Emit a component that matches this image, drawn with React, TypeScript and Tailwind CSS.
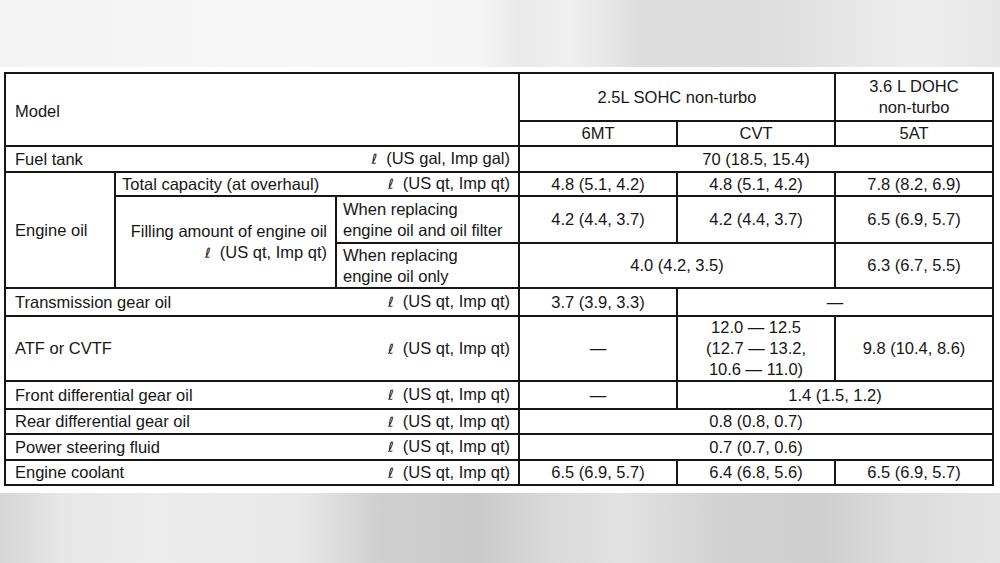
import React from "react";

const L = "\u2113";

function Cell({
  className = "",
  children,
}: {
  className?: string;
  children?: React.ReactNode;
}) {
  return <div className={`bg-white flex items-center ${className}`}>{children}</div>;
}

function Ell() {
  return <span className="font-['DejaVu_Sans',sans-serif] text-[14px] mr-[9px]">{L}</span>;
}

function Label({ name }: { name: string }) {
  return (
    <Cell className="col-span-3 justify-between pl-[9px] pr-[8px]">
      <span>{name}</span>
      <span>
        <Ell />(US qt, Imp qt)
      </span>
    </Cell>
  );
}

function V({ className = "", children }: { className?: string; children?: React.ReactNode }) {
  return <Cell className={`justify-center text-center ${className}`}>{children}</Cell>;
}

export default function App() {
  return (
    <div className="w-[1000px] h-[563px] overflow-hidden flex flex-col font-['Liberation_Sans',Arial,sans-serif] text-[16.5px] text-[#161616]">
      <div className="h-[67px] shrink-0 bg-[linear-gradient(90deg,#f3f3f3_0%,#f7f7f7_30%,#f5f5f5_48%,#e9e9e9_52%,#f0f0f0_57%,#dedede_64%,#dcdcdc_72%,#e0e0e0_80%,#e8e8e8_86%,#eeeeee_92%,#e6e6e6_100%)]" />
      <div className="h-[426px] shrink-0 bg-white pt-[5px] pl-[4px]">
        <div className="w-[990px] h-[414px] bg-[#151515] p-[2px] grid gap-[2px] grid-cols-[108px_219px_181px_156px_156px_156px] grid-rows-[46px_23px_24px_22px_45px_43px_26px_63px_26px_23px_24px_23px] leading-[21px]">
          {/* header */}
          <Cell className="col-span-3 row-span-2 px-[9px] pt-[4px]">Model</Cell>
          <V className="col-span-2">2.5L SOHC non-turbo</V>
          <V>
            3.6 L DOHC
            <br />
            non-turbo
          </V>
          <V>6MT</V>
          <V>CVT</V>
          <V>5AT</V>

          {/* fuel tank */}
          <Cell className="col-span-3 justify-between pl-[9px] pr-[8px]">
            <span>Fuel tank</span>
            <span>
              <Ell />(US gal, Imp gal)
            </span>
          </Cell>
          <V className="col-span-3">70 (18.5, 15.4)</V>

          {/* engine oil */}
          <Cell className="row-span-3 px-[9px]">Engine oil</Cell>
          <Cell className="col-span-2 justify-between pl-[6px] pr-[8px]">
            <span>Total capacity (at overhaul)</span>
            <span>
              <Ell />(US qt, Imp qt)
            </span>
          </Cell>
          <V>4.8 (5.1, 4.2)</V>
          <V>4.8 (5.1, 4.2)</V>
          <V>7.8 (8.2, 6.9)</V>

          <Cell className="row-span-2 justify-end text-right pr-[8px]">
            <span>
              Filling amount of engine oil
              <br />
              <Ell />(US qt, Imp qt)
            </span>
          </Cell>
          <Cell className="px-[6px]">
            <span>
              When replacing
              <br />
              engine oil and oil filter
            </span>
          </Cell>
          <V>4.2 (4.4, 3.7)</V>
          <V>4.2 (4.4, 3.7)</V>
          <V>6.5 (6.9, 5.7)</V>

          <Cell className="px-[6px]">
            <span>
              When replacing
              <br />
              engine oil only
            </span>
          </Cell>
          <V className="col-span-2">4.0 (4.2, 3.5)</V>
          <V>6.3 (6.7, 5.5)</V>

          {/* transmission */}
          <Label name="Transmission gear oil" />
          <V>3.7 (3.9, 3.3)</V>
          <V className="col-span-2">—</V>

          {/* ATF */}
          <Label name="ATF or CVTF" />
          <V>—</V>
          <V>
            12.0 — 12.5
            <br />
            (12.7 — 13.2,
            <br />
            10.6 — 11.0)
          </V>
          <V>9.8 (10.4, 8.6)</V>

          <Label name="Front differential gear oil" />
          <V>—</V>
          <V className="col-span-2">1.4 (1.5, 1.2)</V>

          <Label name="Rear differential gear oil" />
          <V className="col-span-3">0.8 (0.8, 0.7)</V>

          <Label name="Power steering fluid" />
          <V className="col-span-3">0.7 (0.7, 0.6)</V>

          <Label name="Engine coolant" />
          <V>6.5 (6.9, 5.7)</V>
          <V>6.4 (6.8, 5.6)</V>
          <V>6.5 (6.9, 5.7)</V>
        </div>
      </div>
      <div className="flex-1 bg-[linear-gradient(90deg,#d6d6d6_0%,#e6e6e6_6%,#ececec_15%,#e8e8e8_30%,#cfcfcf_38%,#cacaca_48%,#d9d9d9_55%,#e2e2e2_62%,#d2d2d2_72%,#cecece_82%,#dcdcdc_90%,#e4e4e4_100%)]" />
    </div>
  );
}
